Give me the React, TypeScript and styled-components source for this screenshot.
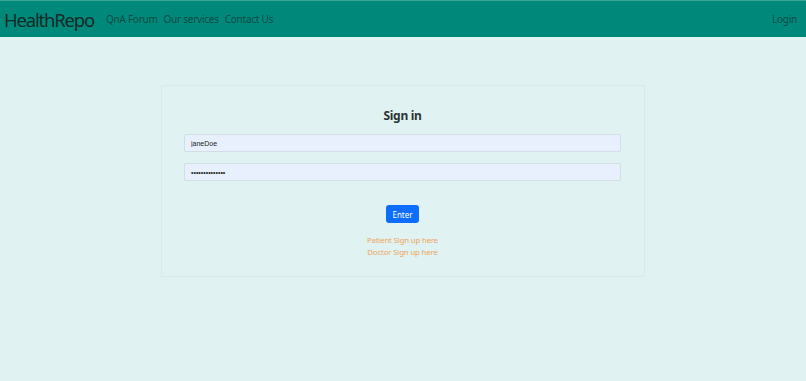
import React from 'react';
import styled, { createGlobalStyle } from 'styled-components';

const GlobalStyle = createGlobalStyle`
	body {
		margin: 0;
		background: #e0f2f1;
		font-family: 'Noto Sans', 'Open Sans', sans-serif;
	}
	* { box-sizing: border-box; }
`;

const Page = styled.div`
	min-height: 381px;
	background: #e0f2f1;
`;

const Navbar = styled.nav`
	display: flex;
	align-items: center;
	height: 37px;
	padding: 0 9px 0 4px;
	background: #00897b;
	border-top: 1px solid #3aa595;
`;

const Brand = styled.a`
	font-size: 18.5px;
	color: #102a27;
	margin-right: 12px;
	letter-spacing: -1.2px;
`;

const NavLinks = styled.div`
	display: flex;
	gap: 6px;
	flex: 1;
`;

const NavLink = styled.a`
	font-size: 10px;
	letter-spacing: -0.25px;
	color: #0e4a43;
`;

const Main = styled.main`
	display: flex;
	justify-content: center;
	padding-top: 48px;
`;

const Card = styled.form`
	width: 484px;
	padding: 21px 23px 19px 22px;
	border: 1px solid #d4ebe9;
	display: flex;
	flex-direction: column;
	align-items: center;
`;

const Title = styled.h2`
	margin: 0 0 10px;
	font-size: 12px;
	letter-spacing: -0.3px;
	font-weight: 700;
	color: #2b3331;
`;

const Input = styled.input`
	width: 100%;
	height: 18px;
	padding: 0 6px;
	margin-bottom: 11px;
	font-family: 'Liberation Sans', sans-serif;
	font-size: 7px;
	color: #222;
	background: #e8f0fe;
	border: 1px solid #d2dde6;
	border-radius: 2px;
	outline: none;
`;

const Button = styled.button`
	margin-top: 13px;
	height: 18px;
	padding: 0 6px;
	font-family: inherit;
	font-size: 8px;
	color: #fff;
	background: #0d6efd;
	border: none;
	border-radius: 3px;
`;

const SignUpLinks = styled.div`
	margin-top: 12px;
	display: flex;
	flex-direction: column;
	align-items: center;
	gap: 1px;
`;

const SignUpLink = styled.a`
	font-size: 7.8px;
	letter-spacing: -0.15px;
	line-height: 10.5px;
	color: #eea65a;
`;

export default function App() {
	return (
		<Page>
			<GlobalStyle />
			<Navbar>
				<Brand>HealthRepo</Brand>
				<NavLinks>
					<NavLink>QnA Forum</NavLink>
					<NavLink>Our services</NavLink>
					<NavLink>Contact Us</NavLink>
				</NavLinks>
				<NavLink>Login</NavLink>
			</Navbar>
			<Main>
				<Card onSubmit={(e) => e.preventDefault()}>
					<Title>Sign in</Title>
					<Input defaultValue="janeDoe" />
					<Input type="password" defaultValue="password123456" />
					<Button type="submit">Enter</Button>
					<SignUpLinks>
						<SignUpLink>Patient Sign up here</SignUpLink>
						<SignUpLink>Doctor Sign up here</SignUpLink>
					</SignUpLinks>
				</Card>
			</Main>
		</Page>
	);
}
